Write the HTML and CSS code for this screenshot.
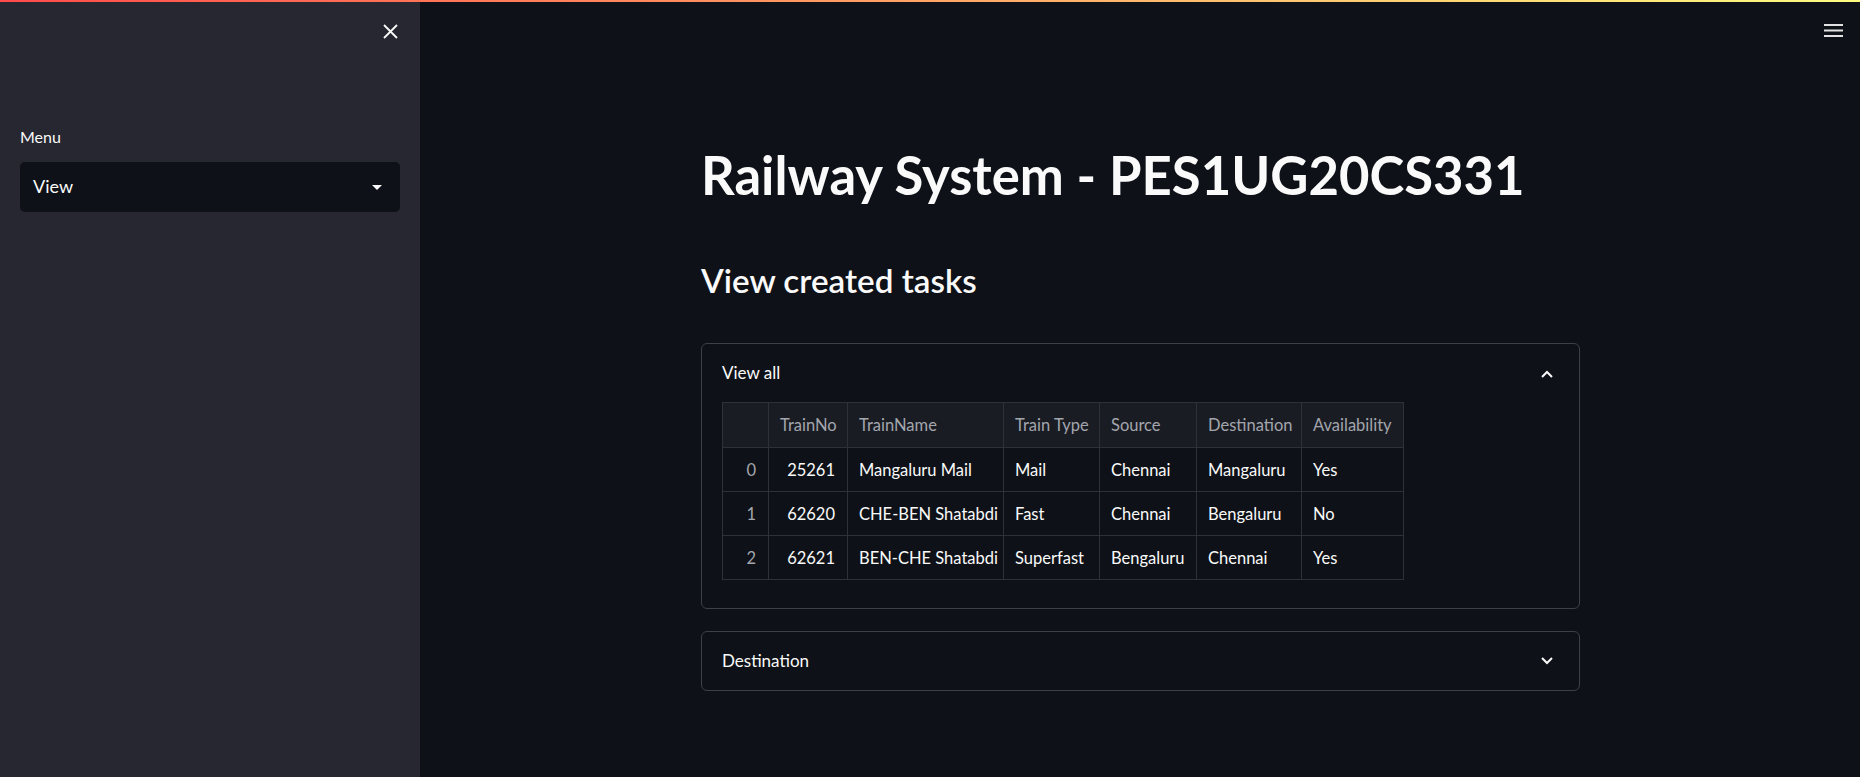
FILE: index.html
```html
<!DOCTYPE html>
<html lang="en">
<head>
<meta charset="utf-8">
<title>Railway System</title>
<link rel="stylesheet" href="styles.css">
</head>
<body>
<div class="decoration"></div>
<div class="app">
  <aside class="sidebar">
    <div class="sidebar-top">
      <button class="icon-btn" aria-label="Close sidebar">
        <svg width="15" height="15" viewBox="0 0 15 15"><path d="M1 1L14 14M14 1L1 14" stroke="#fafafa" stroke-width="1.8" fill="none"/></svg>
      </button>
    </div>
    <div class="sidebar-content">
      <div class="widget-label">Menu</div>
      <div class="select">
        <span class="select-value">View</span>
        <svg class="select-arrow" width="10" height="5" viewBox="0 0 10 5"><path d="M0 0L5 5L10 0Z" fill="#fafafa"/></svg>
      </div>
    </div>
  </aside>
  <main class="main">
    <header class="toolbar">
      <button class="icon-btn" aria-label="Main menu">
        <svg width="19" height="13" viewBox="0 0 19 13"><rect x="0" y="0" width="19" height="2" fill="#e2e2e2"/><rect x="0" y="5.5" width="19" height="2" fill="#e2e2e2"/><rect x="0" y="11" width="19" height="2" fill="#e2e2e2"/></svg>
      </button>
    </header>
    <div class="block">
      <h1 class="title">Railway System - PES1UG20CS331</h1>
      <h2 class="subtitle">View created tasks</h2>

      <section class="expander">
        <div class="exp-header">
          <span class="exp-label">View all</span>
          <svg width="12" height="8" viewBox="0 0 12 8"><polyline points="1,7 6,2 11,7" stroke="#fafafa" stroke-width="2" fill="none"/></svg>
        </div>
        <div class="exp-body">
          <table class="df">
            <colgroup>
              <col class="c-idx"><col class="c-no"><col class="c-name"><col class="c-type"><col class="c-src"><col class="c-dst"><col class="c-av">
            </colgroup>
            <thead>
              <tr><th></th><th class="num">TrainNo</th><th>TrainName</th><th>Train Type</th><th>Source</th><th>Destination</th><th>Availability</th></tr>
            </thead>
            <tbody>
              <tr><th>0</th><td class="num">25261</td><td>Mangaluru Mail</td><td>Mail</td><td>Chennai</td><td>Mangaluru</td><td>Yes</td></tr>
              <tr><th>1</th><td class="num">62620</td><td>CHE-BEN Shatabdi</td><td>Fast</td><td>Chennai</td><td>Bengaluru</td><td>No</td></tr>
              <tr><th>2</th><td class="num">62621</td><td>BEN-CHE Shatabdi</td><td>Superfast</td><td>Bengaluru</td><td>Chennai</td><td>Yes</td></tr>
            </tbody>
          </table>
        </div>
      </section>

      <section class="expander expander-gap">
        <div class="exp-header">
          <span class="exp-label">Destination</span>
          <svg width="12" height="8" viewBox="0 0 12 8"><polyline points="1,1 6,6 11,1" stroke="#fafafa" stroke-width="2" fill="none"/></svg>
        </div>
      </section>
    </div>
  </main>
</div>
</body>
</html>
```

FILE: styles.css
```css
* { box-sizing: border-box; }
html, body { margin: 0; padding: 0; }
body {
  background: #0e1117;
  color: #fafafa;
  font-family: Lato, "Noto Sans", sans-serif;
  width: 1860px;
  height: 777px;
  overflow: hidden;
}
.decoration {
  height: 2px;
  background: linear-gradient(90deg, #ff4b4b, #fffd80);
}
.app { display: flex; height: 775px; }

.sidebar {
  flex: 0 0 420px;
  width: 420px;
  background: #262730;
  display: flex;
  flex-direction: column;
}
.sidebar-top {
  height: 60px;
  display: flex;
  justify-content: flex-end;
  align-items: flex-start;
  padding: 22px 22px 0 0;
}
.icon-btn {
  background: none;
  border: 0;
  padding: 0;
  margin: 0;
  display: block;
  line-height: 0;
  cursor: pointer;
}
.sidebar-content { padding: 62.5px 20px 0; }
.widget-label { font-size: 16px; line-height: 24px; height: 24px; }
.select {
  margin-top: 13.5px;
  height: 50px;
  background: #0e1117;
  border-radius: 5px;
  display: flex;
  align-items: center;
  justify-content: space-between;
  padding: 0 18px 0 13px;
}
.select-value { font-size: 18px; line-height: 1.2; }

.main { flex: 1; display: flex; flex-direction: column; min-width: 0; }
.toolbar {
  height: 60px;
  display: flex;
  justify-content: flex-end;
  align-items: flex-start;
  padding: 22px 17px 0 0;
}
.block { width: 879px; margin-left: calc(50% - 439px); padding-top: 80.5px; }

.title {
  margin: 0;
  font-size: 52.6px;
  line-height: 64px;
  font-weight: 700;
}
.subtitle {
  margin: 51px 0 0;
  font-size: 33.2px;
  line-height: 44px;
  font-weight: 600;
}

.expander {
  margin-top: 41.5px;
  border: 1px solid #3d4046;
  border-radius: 6px;
}
.expander-gap { margin-top: 21.5px; }
.exp-header {
  height: 58px;
  display: flex;
  align-items: center;
  justify-content: space-between;
  padding: 1px 26px 0 20px;
}
.exp-label { font-size: 17px; line-height: 1.2; }
.exp-body { padding: 0 20px 28px; }

.df {
  border-collapse: collapse;
  table-layout: fixed;
  width: 681px;
  font-size: 16.5px;
}
.c-idx { width: 46px; }
.c-no { width: 79px; }
.c-name { width: 156px; }
.c-type { width: 96px; }
.c-src { width: 97px; }
.c-dst { width: 105px; }
.c-av { width: 102px; }
.df th, .df td {
  border: 1px solid #2f3139;
  padding: 0 12px 0 11px;
  height: 44px;
  white-space: nowrap;
  overflow: hidden;
  text-align: left;
  font-weight: 400;
}
.df thead th {
  background: #1a1c24;
  color: #a3a6ad;
  height: 45px;
}
.df tbody th { color: #a3a6ad; text-align: right; }
.df .num { text-align: right; }
```
